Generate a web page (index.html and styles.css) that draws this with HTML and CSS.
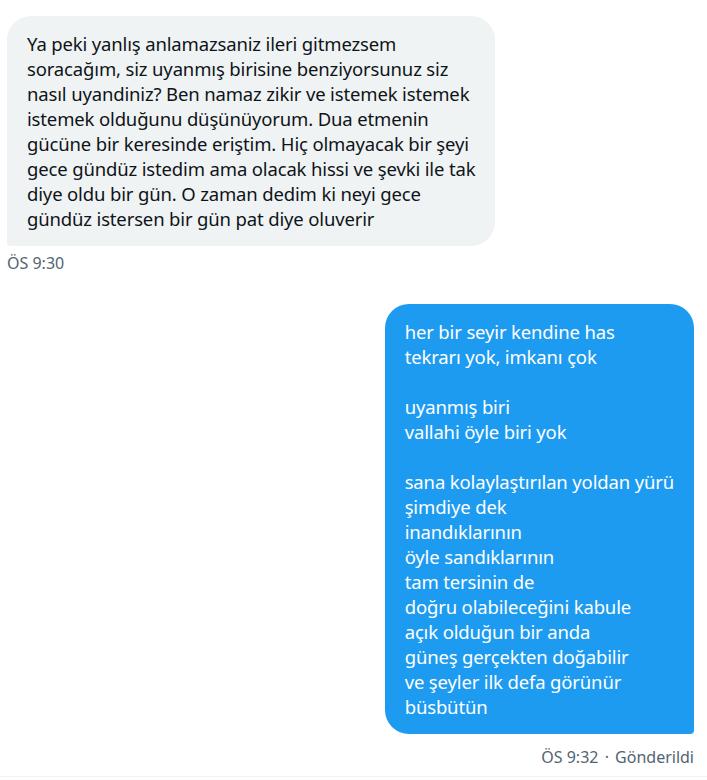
FILE: index.html
```html
<!DOCTYPE html>
<html lang="tr">
<head>
<meta charset="utf-8">
<link rel="stylesheet" href="styles.css">
</head>
<body>
<div class="chat">
  <div class="msg in">
    <div class="bubble gray">Ya peki yanlış anlamazsaniz ileri gitmezsem
soracağım, siz uyanmış birisine benziyorsunuz siz
nasıl uyandiniz? Ben namaz zikir ve istemek istemek
istemek olduğunu düşünüyorum. Dua etmenin
gücüne bir keresinde eriştim. Hiç olmayacak bir şeyi
gece gündüz istedim ama olacak hissi ve şevki ile tak
diye oldu bir gün. O zaman dedim ki neyi gece
gündüz istersen bir gün pat diye oluverir</div>
    <div class="meta">ÖS 9:30</div>
  </div>
  <div class="msg out">
    <div class="bubble blue">her bir seyir kendine has
tekrarı yok, imkanı çok

uyanmış biri
vallahi öyle biri yok

sana kolaylaştırılan yoldan yürü
şimdiye dek
inandıklarının
öyle sandıklarının
tam tersinin de
doğru olabileceğini kabule
açık olduğun bir anda
güneş gerçekten doğabilir
ve şeyler ilk defa görünür
büsbütün</div>
    <div class="meta">ÖS 9:32 <span class="dot">·</span> Gönderildi</div>
  </div>
</div>
<div class="divider"></div>
</body>
</html>
```

FILE: styles.css
```css
html, body {
  margin: 0;
  padding: 0;
  background: #ffffff;
}
body {
  font-family: "Noto Sans", "Open Sans", sans-serif;
  color: #0f1419;
}
.chat {
  padding: 16px 13px 0 7px;
  display: flex;
  flex-direction: column;
}
.msg {
  display: flex;
  flex-direction: column;
}
.msg.in {
  align-items: flex-start;
}
.msg.out {
  align-items: flex-end;
  margin-top: 31px;
}
.bubble {
  white-space: pre-line;
  font-size: 18.5px;
  letter-spacing: -0.15px;
  line-height: 25px;
  padding: 15px 20px;
  width: fit-content;
}
.gray {
  background: #eff3f4;
  color: #0f1419;
  border-radius: 24px 24px 24px 4px;
}
.blue {
  background: #1d9bf0;
  color: #ffffff;
  border-radius: 24px 24px 4px 24px;
}
.meta {
  font-size: 16px;
  line-height: 20px;
  color: #536471;
  margin-top: 7px;
}
.out .meta {
  margin-top: 13px;
}
.dot {
  padding: 0 2px;
}
.divider {
  margin-top: 9px;
  height: 1px;
  background: #eff3f4;
}
```
